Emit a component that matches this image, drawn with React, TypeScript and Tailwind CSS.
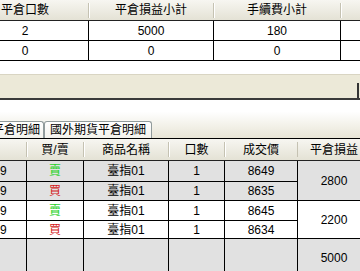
import React from "react";

const TOP_COLS = ["w-[127px]", "w-[125px]", "w-[127px]", "w-[60px]"];
const TOP_HEAD = ["平倉口數", "平倉損益小計", "手續費小計", ""];
const TOP_ROWS = [
  ["2", "5000", "180", ""],
  ["0", "0", "0", ""],
];

const COLS = ["w-[27px]", "w-[57px]", "w-[85px]", "w-[56px]", "w-[73px]"];
const HEAD = ["", "買/賣", "商品名稱", "口數", "成交價"];

const ROWS = [
  { side: "賣", qty: "1", price: "8649", h: "h-[21px]", bg: "bg-[#E1E1E1]" },
  { side: "買", qty: "1", price: "8635", h: "h-[19px]", bg: "bg-[#E1E1E1]" },
  { side: "賣", qty: "1", price: "8645", h: "h-[20px]", bg: "bg-white" },
  { side: "買", qty: "1", price: "8634", h: "h-[18px]", bg: "bg-white" },
];

function HeadCell({ w, children }: { w: string; children?: React.ReactNode }) {
  return (
    <div className={`${w} shrink-0 h-full flex items-center`}>
      <span className="flex-1 text-center text-[12px] leading-none text-black">{children}</span>
      <span className="w-px h-[15px] bg-[#C5C2B2] shadow-[1px_0_0_#ffffff]" />
    </div>
  );
}

export default function App() {
  return (
    <div className="w-[360px] h-[271px] overflow-hidden bg-white font-['Liberation_Sans','Noto_Sans_CJK_TC',sans-serif] text-black">
      {/* summary table */}
      <div className="-ml-[38px] w-[440px]">
        <div className="flex h-[21px] border-b border-[#222] bg-gradient-to-b from-[#F7F6F1] to-[#E4E2D5]">
          {TOP_HEAD.map((t, i) => (
            <HeadCell key={i} w={TOP_COLS[i]}>
              {t}
            </HeadCell>
          ))}
        </div>
        {TOP_ROWS.map((r, ri) => (
          <div key={ri} className="flex h-[20px] border-b border-black">
            {r.map((v, i) => (
              <div
                key={i}
                className={`${TOP_COLS[i]} shrink-0 flex items-center justify-center border-r border-black text-[12px]`}
              >
                {v}
              </div>
            ))}
          </div>
        ))}
      </div>

      {/* status band */}
      <div className="mt-[13px] h-[26px] bg-[#ECE9D8] border-t border-[#D9D5C3] border-b-2 border-b-[#3A3A3A] flex items-end justify-end pr-[1px]">
        <div className="w-[2px] h-[15px] bg-[#333]" />
      </div>

      {/* tabs */}
      <div className="h-[39px] border-b border-black bg-gradient-to-b from-white from-[30%] to-[#E8E5D6] flex items-end">
        <div className="-ml-[12px] flex items-end">
          <div className="w-[56px] h-[17px] rounded-t-[3px] border border-b-0 border-[#919B9C] bg-gradient-to-b from-white to-[#F3F2EC] flex items-center justify-center text-[12px] leading-none">
            平倉明細
          </div>
          <div className="w-[108px] h-[17px] rounded-t-[3px] border border-b-0 border-[#919B9C] bg-gradient-to-b from-white to-[#F3F2EC] flex items-center justify-center text-[12px] leading-none">
            國外期貨平倉明細
          </div>
        </div>
      </div>

      {/* detail table */}
      <div className="flex w-[370px]">
        <div className="w-[298px] shrink-0">
          <div className="flex h-[22px] border-b border-[#222] bg-gradient-to-b from-[#F7F6F1] to-[#E4E2D5]">
            {HEAD.map((t, i) => (
              <HeadCell key={i} w={COLS[i]}>
                {t}
              </HeadCell>
            ))}
          </div>
          {ROWS.map((r, ri) => (
            <div key={ri} className={`flex ${r.h} ${r.bg} border-b border-black`}>
              <div className={`${COLS[0]} shrink-0 flex items-center border-r border-black text-[12px]`}>9</div>
              <div
                className={`${COLS[1]} shrink-0 flex items-center justify-center border-r border-black text-[12px] ${
                  r.side === "賣" ? "text-[#1FD21F]" : "text-[#D41A1A]"
                }`}
              >
                {r.side}
              </div>
              <div className={`${COLS[2]} shrink-0 flex items-center justify-center border-r border-black text-[12px]`}>
                臺指01
              </div>
              <div className={`${COLS[3]} shrink-0 flex items-center justify-center border-r border-black text-[12px]`}>
                {r.qty}
              </div>
              <div className={`${COLS[4]} shrink-0 flex items-center justify-center border-r border-black text-[12px]`}>
                {r.price}
              </div>
            </div>
          ))}
          <div className="flex h-[38px] bg-[#E1E1E1]">
            {COLS.map((w, i) => (
              <div key={i} className={`${w} shrink-0 border-r border-black`} />
            ))}
          </div>
        </div>
        <div className="w-[72px] shrink-0">
          <div className="h-[22px] flex items-center justify-center border-b border-[#222] bg-gradient-to-b from-[#F7F6F1] to-[#E4E2D5] text-[12px] leading-none">
            平倉損益
          </div>
          <div className="h-[40px] flex items-center justify-center bg-[#E1E1E1] border-b border-black text-[12px]">2800</div>
          <div className="h-[38px] flex items-center justify-center bg-white border-b border-black text-[12px]">2200</div>
          <div className="h-[38px] flex items-center justify-center bg-[#E1E1E1] text-[12px]">5000</div>
        </div>
      </div>
    </div>
  );
}
